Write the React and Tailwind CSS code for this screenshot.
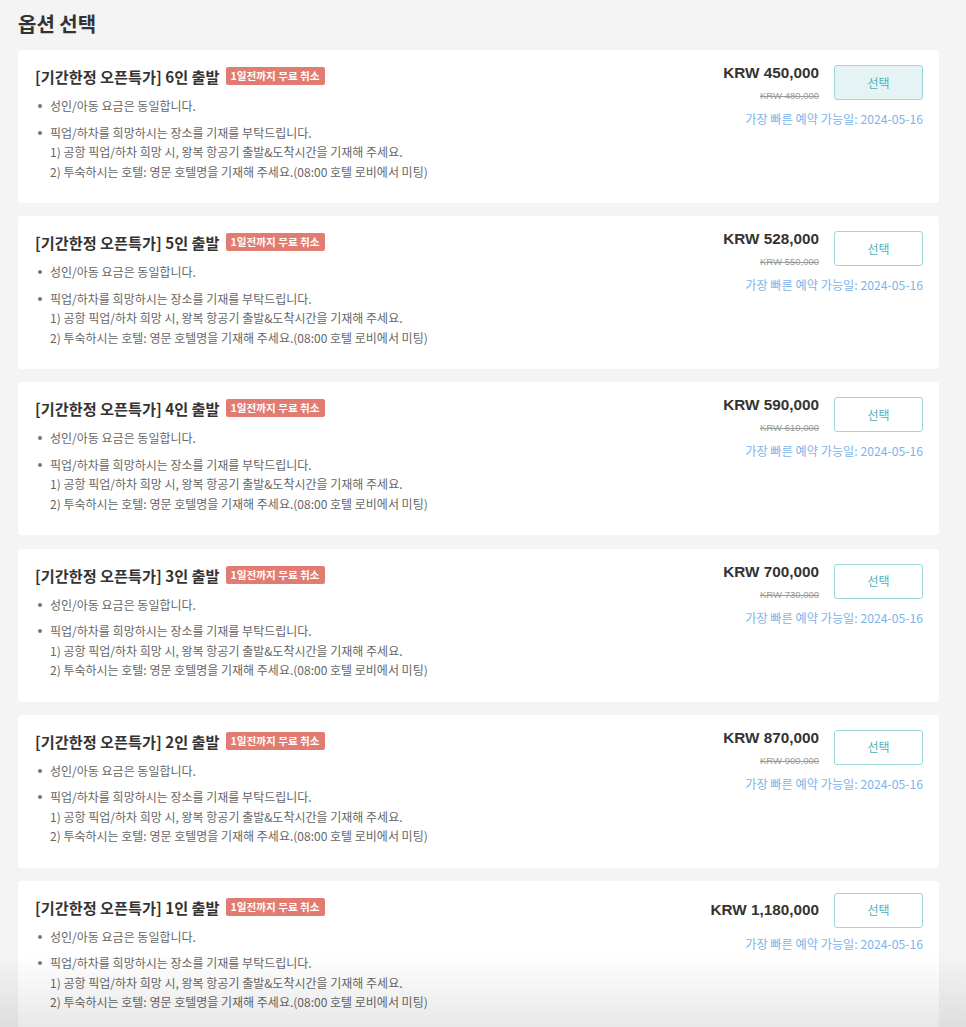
import React from "react";

const options = [
  { n: 6, price: "KRW 450,000", orig: "KRW 480,000", selected: true },
  { n: 5, price: "KRW 528,000", orig: "KRW 550,000" },
  { n: 4, price: "KRW 590,000", orig: "KRW 610,000" },
  { n: 3, price: "KRW 700,000", orig: "KRW 730,000" },
  { n: 2, price: "KRW 870,000", orig: "KRW 900,000" },
  { n: 1, price: "KRW 1,180,000", orig: null },
];

const KR = { fontFamily: '"Noto Sans CJK KR", "Noto Sans", sans-serif' };
const LAT = { fontFamily: '"Liberation Sans", Arial, sans-serif' };

function Dot() {
  return (
    <span className="flex w-[15px] shrink-0 pt-[8px]">
      <span className="ml-[3px] block h-[4px] w-[4px] rounded-full bg-[#777]" />
    </span>
  );
}

function Card({ o }) {
  return (
    <div className="flex justify-between rounded-[4px] bg-white pl-[17px] pr-[16px] pt-[14px] pb-[22px]">
      <div className="flex flex-col">
        <div className="flex items-center gap-[6px]">
          <span className="text-[15.2px] font-bold leading-[24px] text-[#333]">
            [기간한정 오픈특가] {o.n}인 출발
          </span>
          <span className="flex h-[18px] items-center rounded-[2px] bg-[#e27c72] px-[5px] text-[10.6px] font-bold text-white">
            1일전까지 무료 취소
          </span>
        </div>
        <ul className="mt-[8px] text-[12px] leading-[19.5px] text-[#666]">
          <li className="flex">
            <Dot />
            <span>성인/아동 요금은 동일합니다.</span>
          </li>
          <li className="mt-[7px] flex">
            <Dot />
            <div className="flex flex-col">
              <span>픽업/하차를 희망하시는 장소를 기재를 부탁드립니다.</span>
              <span>1) 공항 픽업/하차 희망 시, 왕복 항공기 출발&amp;도착시간을 기재해 주세요.</span>
              <span>2) 투숙하시는 호텔: 영문 호텔명을 기재해 주세요.(08:00 호텔 로비에서 미팅)</span>
            </div>
          </li>
        </ul>
      </div>
      <div className="-mt-[2px] flex flex-col items-end">
        <div className="flex items-center gap-[15px]">
          <div className="flex flex-col items-end">
            <span style={LAT} className="text-[15.3px] font-bold leading-[22px] text-[#333]">
              {o.price}
            </span>
            {o.orig && (
              <span style={LAT} className="mt-[5px] text-[9.5px] leading-[14px] text-[#9a9a9a] line-through">
                {o.orig}
              </span>
            )}
          </div>
          <button
            className={
              "flex h-[35px] w-[89px] items-center justify-center rounded-[3px] border border-[#9dd6dc] text-[12px] text-[#4fb0bb] " +
              (o.selected ? "bg-[#e6f3f4]" : "bg-white")
            }
          >
            선택
          </button>
        </div>
        <span className="mt-[7px] text-[12.2px] leading-[18px] text-[#7cb4ea]">
          가장 빠른 예약 가능일: 2024-05-16
        </span>
      </div>
    </div>
  );
}

export default function App() {
  return (
    <div style={KR} className="relative min-h-[1027px] overflow-hidden bg-[#f4f4f4] pl-[18px] pr-[27px] pt-[9px]">
      <h1 className="text-[20px] font-bold leading-[30px] text-[#333]">옵션 선택</h1>
      <div className="mt-[11px] flex flex-col gap-[13.2px]">
        {options.map((o) => (
          <Card key={o.n} o={o} />
        ))}
      </div>
      <div className="pointer-events-none absolute inset-x-0 bottom-0 h-[80px] bg-linear-to-b from-transparent to-black/10" />
    </div>
  );
}
